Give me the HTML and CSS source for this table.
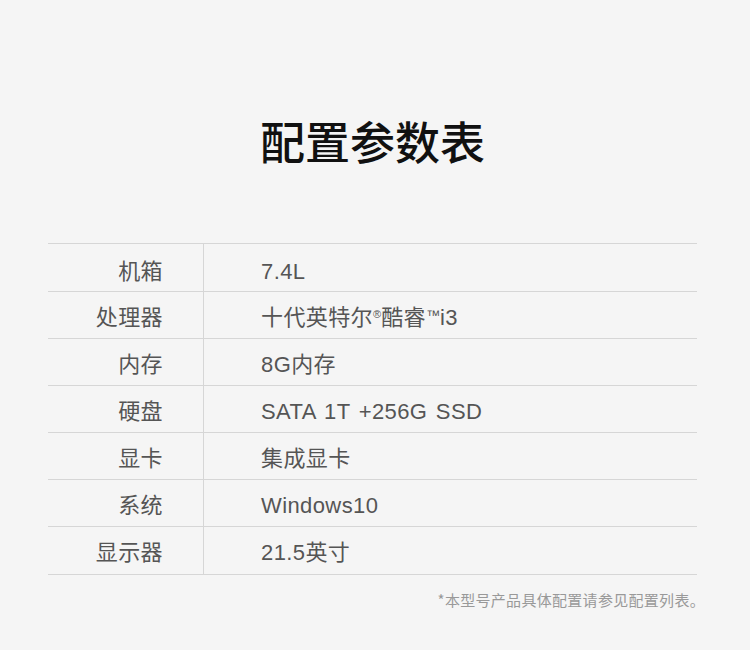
FILE: index.html
```html
<!DOCTYPE html>
<html lang="zh-CN">
<head>
<meta charset="utf-8">
<link rel="stylesheet" href="styles.css">
</head>
<body>
<div class="page">
  <h1 class="title">配置参数表</h1>
  <div class="spec">
    <div class="row"><div class="label">机箱</div><div class="value">7.4L</div></div>
    <div class="row"><div class="label">处理器</div><div class="value">十代英特尔<sup class="mark">®</sup>酷睿<sup class="mark tm">™</sup>i3</div></div>
    <div class="row"><div class="label">内存</div><div class="value">8G内存</div></div>
    <div class="row"><div class="label">硬盘</div><div class="value">SATA 1T +256G SSD</div></div>
    <div class="row"><div class="label">显卡</div><div class="value">集成显卡</div></div>
    <div class="row"><div class="label">系统</div><div class="value">Windows10</div></div>
    <div class="row"><div class="label">显示器</div><div class="value">21.5英寸</div></div>
  </div>
  <p class="note">*本型号产品具体配置请参见配置列表。</p>
</div>
</body>
</html>
```
FILE: styles.css
```css
html, body {
  margin: 0;
  padding: 0;
  background: #f5f5f5;
}
.page {
  width: 750px;
  height: 650px;
  box-sizing: border-box;
  padding: 0 53px 0 48px;
  font-family: "Liberation Sans", "Noto Sans CJK SC", sans-serif;
  color: #555;
}
.title {
  margin: 0;
  height: 243px;
  box-sizing: border-box;
  padding-top: 113px;
  line-height: 56px;
  text-align: center;
  font-family: "Noto Sans CJK SC", sans-serif;
  font-size: 45px;
  font-weight: 500;
  color: #111;
}
.spec {
  border-top: 1px solid #d6d6d6;
}
.row {
  display: flex;
  height: 46px;
  border-bottom: 1px solid #d6d6d6;
  font-size: 22px;
  letter-spacing: 0.4px;
  word-spacing: 2px;
}
.row:first-child,
.row:last-child {
  height: 47px;
}
.label,
.value {
  padding-top: 5px;
  line-height: 41px;
  color: #555;
}
.row:first-child .label,
.row:first-child .value {
  padding-top: 7px;
}
.label {
  width: 156px;
  box-sizing: border-box;
  padding-right: 40px;
  text-align: right;
  border-right: 1px solid #d6d6d6;
}
.value {
  padding-left: 57px;
}
.mark {
  font-size: 11px;
  vertical-align: 7px;
  line-height: 0;
  letter-spacing: 0;
}
.mark.tm {
  font-size: 14px;
  vertical-align: 5px;
}
.note {
  margin: 16px -8px 0 0;
  text-align: right;
  font-size: 15px;
  line-height: 18px;
  letter-spacing: 0.3px;
  color: #999;
  font-family: "Noto Sans CJK SC", sans-serif;
}
```
